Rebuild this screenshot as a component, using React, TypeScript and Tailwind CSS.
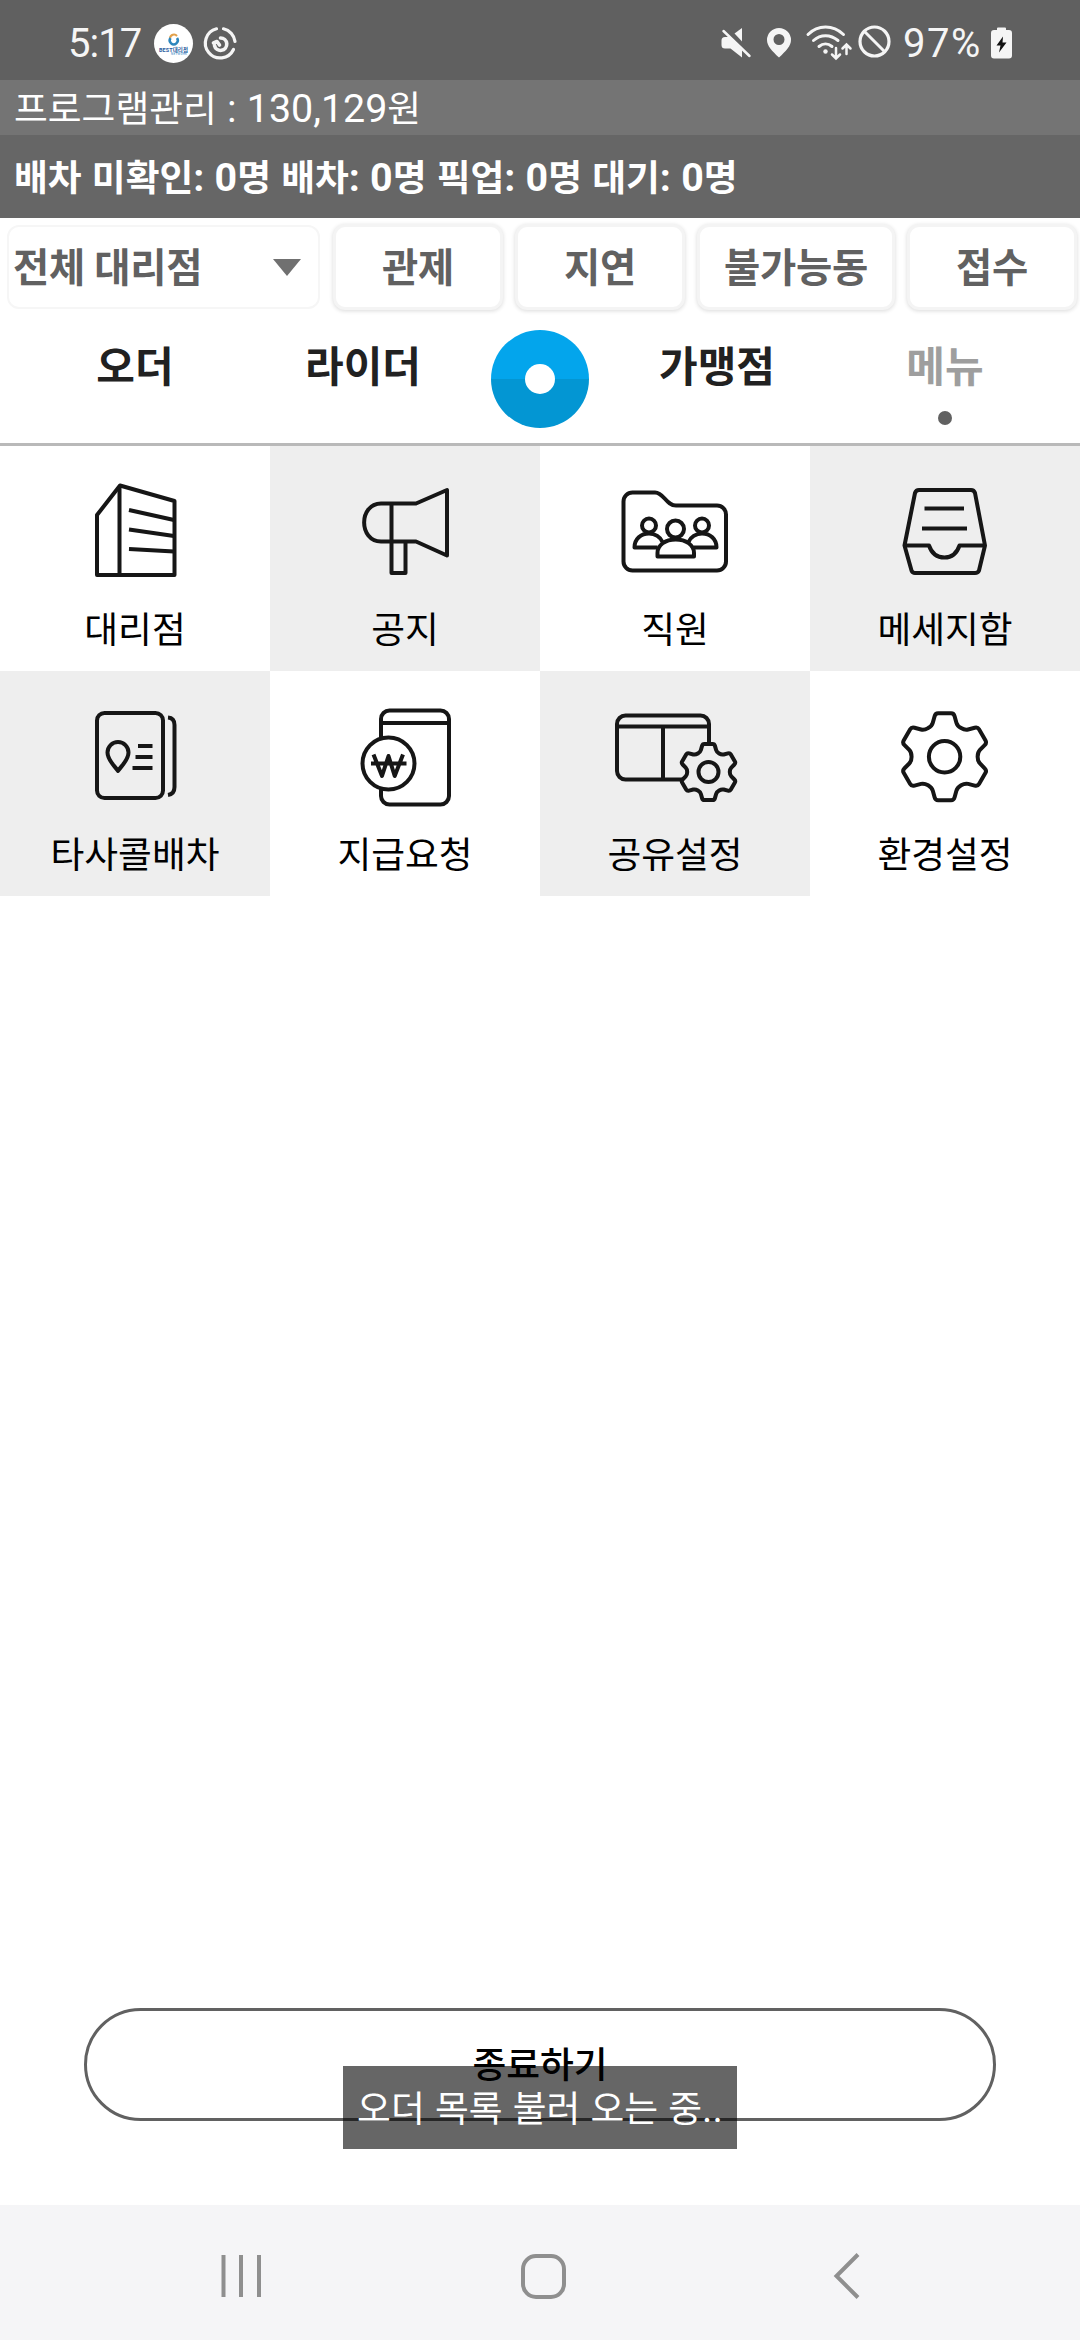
import type { ReactNode } from "react";

interface MenuItem {
  label: string;
  icon: ReactNode;
}

// Rotates one tooth outline six times to get the whole cog
const TOOTH: [string, number[][]][] = [
  ["C", [[-13.9, -30.1], [-12.5, -31.5], [-11.8, -34]]],
  ["L", [[-10, -40.5]]],
  ["Q", [[-9.2, -43.5], [-6.5, -43.5]]],
  ["L", [[6.5, -43.5]]],
  ["Q", [[9.2, -43.5], [10, -40.5]]],
  ["L", [[11.8, -34]]],
  ["C", [[12.5, -31.5], [13.9, -30.1], [16.5, -28.6]]],
];

const gearPath = (cx: number, cy: number, scale: number) => {
  const place = ([x, y]: number[], turn: number) => {
    const a = (turn * Math.PI) / 3;
    const px = cx + scale * (x * Math.cos(a) - y * Math.sin(a));
    const py = cy + scale * (x * Math.sin(a) + y * Math.cos(a));
    return `${px.toFixed(2)} ${py.toFixed(2)}`;
  };
  let d = `M${place([-16.5, -28.6], 0)}`;
  for (let turn = 0; turn < 6; turn++) {
    for (const [cmd, pts] of TOOTH) {
      d += cmd + pts.map((p) => place(p, turn)).join(" ");
    }
  }
  return d + "Z";
};

const MENU: MenuItem[] = [
  {
    label: "대리점",
    icon: (
      <>
        <path d="M97 69 120 39.5 174.5 55V129H97Z" />
        <path d="M119.5 40V129M129 64 174 74M129 83.5 174 90M129 103 174 105.5" />
      </>
    ),
  },
  {
    label: "공지",
    icon: (
      <>
        <path d="M111 57.5H146L177 44V109.5L146 95.5H111C88.5 95 88.5 58 111 57.5Z" />
        <path d="M121.5 57.5V127H135.5V95.5" />
      </>
    ),
  },
  {
    label: "직원",
    icon: (
      <>
        <path d="M92.5 46.5H115C124 46.5 126 59.5 136 59.5H177A9 9 0 0 1 186 68.5V115.5A9 9 0 0 1 177 124.5H92.5A9 9 0 0 1 83.5 115.5V55.5A9 9 0 0 1 92.5 46.5Z" />
        <circle cx="109" cy="79.5" r="7" />
        <circle cx="162" cy="79.5" r="7" />
        <circle cx="135.5" cy="83" r="8.5" />
        <path d="M117.5 101.5H94.5C94.5 93 101 87.5 109 87.5 115 87.5 120.5 91 122.5 96" />
        <path d="M153.5 101.5H176.5C176.5 93 170 87.5 162 87.5 156 87.5 150.5 91 148.5 96" />
        <path d="M117.5 110.5H154V107C154 99 146 93.5 135.7 93.5S117.5 99 117.5 107Z" />
      </>
    ),
  },
  {
    label: "메세지함",
    icon: (
      <>
        <path d="M94.5 99.5 105 47Q106 44 109 44H161Q164 44 165 47L175 99.5 169 124.5Q168 127 165 127H105Q102.5 127 101.5 124.5Z" />
        <path d="M94.5 99.5H119C121.5 107 127 111.5 134.5 111.5S147 107 149.5 99.5H175" />
        <path d="M114.5 62.5H154M112 82.5H157" />
      </>
    ),
  },
  {
    label: "타사콜배차",
    icon: (
      <>
        <rect x="97" y="42" width="66" height="85" rx="7.5" />
        <path d="M168 46.5Q174.5 47 174.5 54V116Q174.5 123 168 124" />
        <path d="M118 100C114 94 107.5 89 107.5 81.5A10.5 10.5 0 0 1 128.5 81.5C128.5 89 122 94 118 100Z" />
        <path d="M138 75H152.5M135.5 86H152.5M132.5 97H152.5" />
      </>
    ),
  },
  {
    label: "지급요청",
    icon: (
      <>
        <rect x="111" y="39.5" width="68" height="94" rx="8.5" />
        <path d="M111 52H179" />
        <circle cx="118.5" cy="92.5" r="26" fill="#fff" />
        <path d="M103.5 83.5 112 105 118.5 85 124.7 105 133 83.5M101 92.5H136.5" />
      </>
    ),
  },
  {
    label: "공유설정",
    icon: (
      <>
        <rect x="77" y="44.5" width="92" height="64" rx="8.5" />
        <path d="M77 55.5H169M123 55.5V108.5" />
        <path d={gearPath(168.5, 101, 0.645)} fill="#eee" />
        <circle cx="168.5" cy="101" r="10" />
      </>
    ),
  },
  {
    label: "환경설정",
    icon: (
      <>
        <path d={gearPath(134.6, 85.7, 1)} />
        <circle cx="134.6" cy="85.7" r="15.7" />
      </>
    ),
  },
];

// Hangul is set a little smaller than the digits and punctuation around it
const MixedText = ({ children }: { children: string }) => (
  <span className="text-[39.4px] whitespace-pre [word-spacing:0.4px]">
    {children.split(/([가-힣]+)/).map((part, i) =>
      i % 2 ? (
        <span key={i} className="text-[36.75px]">
          {part}
        </span>
      ) : (
        part
      ),
    )}
  </span>
);

const StatusBar = () => (
  <div className="flex h-20 items-center bg-[#606060] pt-[7px] text-[40px] text-[#f5f5f5]">
    <span className="ml-[68px] w-[86px] tracking-[-1px]">5:17</span>
    <svg width="90" height="40" viewBox="154 24 90 40" fill="none">
      <circle cx="173.5" cy="43.5" r="19.5" fill="#fff" />
      <path d="M170 38A4 4 0 0 1 177 36" stroke="#e2a04a" strokeWidth="2" />
      <path d="M170.5 38A4 4 0 1 0 177 38" stroke="#2d86bd" strokeWidth="2.5" />
      <text x="159" y="51.5" fontSize="5.5" fontWeight="700" fill="#2b5c9e" textLength="29">
        BEST대리점
      </text>
      <text x="171" y="55" fontSize="3" fill="#2b7fc0" textLength="16">
        NETWORK
      </text>
      <g stroke="#f5f5f5" strokeWidth="3.2" strokeLinecap="round">
        <path d="M216.5 28.8A14.8 14.8 0 1 0 233.5 49.5M223.5 28.8A14.8 14.8 0 0 1 235 41.5" />
        <path d="M220.5 38A6.2 6.2 0 1 1 214.5 45.5" strokeWidth="3.6" />
        <path d="M213.5 43 217 41.5 219.5 45" strokeWidth="3.6" strokeLinejoin="round" />
      </g>
    </svg>
    <svg className="ml-[477px]" width="173" height="40" viewBox="721 24 173 40" fill="none">
      <g fill="#f5f5f5">
        <path d="M742 28V41.5L734.5 33.5Z" />
        <path d="M725 37H729L742 50V57.5L730.5 48.5H725Q721.500 48.500 721.500 45V40.500Q721.500 37 725 37Z" />
        <path
          fillRule="evenodd"
          d="M779 28A12 12 0 0 0 767 40C767 46 772 51 779 57.5 786 51 791 46 791 40A12 12 0 0 0 779 28ZM779 34A5.5 5.5 0 1 1 779 45 5.5 5.5 0 0 1 779 34Z"
        />
        <circle cx="825.5" cy="51.5" r="2.2" />
      </g>
      <g stroke="#f5f5f5" strokeLinecap="round">
        <path d="M723.5 31 749.500 56" strokeWidth="2.5" />
        <path
          d="M808 34.500C818 24.500 833 24.500 843.500 34.500M813.500 40.500C820.500 34 830.500 34 838 40.500M819 46.500C823 43 828 43 832 46.500"
          strokeWidth="3"
        />
        <path
          d="M836 48V58M832 54.5 836 58.5 840 54.5M846.5 54V45M842.5 48.5 846.5 44.5 850.5 48.5"
          strokeWidth="2.5"
        />
        <circle cx="874.5" cy="41.5" r="14.5" strokeWidth="3.2" />
        <path d="M864.5 31.5 884.5 51.5" strokeWidth="3" />
      </g>
    </svg>
    <span className="ml-[9px] w-[88px] tracking-[1.5px]">97%</span>
    <svg width="22" height="40" viewBox="991 24 22 40">
      <path d="M997 30V28.5Q997 27.5 998 27.5H1005Q1006 27.5 1006 28.5V30H1009Q1012 30 1012 33V55.5Q1012 58.5 1009 58.5H994Q991 58.5 991 55.5V33Q991 30 994 30Z" fill="#f5f5f5" />
      <path d="M1003 36.5 996.5 45.5H1000.5L999 52.5 1006.5 42.5H1002.5Z" fill="#111" />
    </svg>
  </div>
);

const FILTERS = [
  { label: "관제", width: "w-[170px]" },
  { label: "지연", width: "w-[170px]" },
  { label: "불가능동", width: "w-[198px]" },
  { label: "접수", width: "w-[170px]" },
];

const Toolbar = () => (
  <div className="flex h-[98px] pt-[6px] pl-[7px] text-[39.4px] font-bold text-[#616161]">
    <div className="mt-px mr-[13px] flex h-[84px] w-[313px] items-center justify-between rounded-xl border-2 border-[#f6f6f6] pr-[17px] pl-[4px]">
      <span className="pt-[4px] tracking-[-0.3px]">전체 대리점</span>
      <svg width="28" height="17" viewBox="0 0 28 17" fill="#707070">
        <path d="M0 0H28L14 17Z" />
      </svg>
    </div>
    <div className="flex gap-3">
      {FILTERS.map((f) => (
        <button
          key={f.label}
          className={`${f.width} flex h-[86px] items-center justify-center rounded-xl border-[3px] border-[#f4f4f4] bg-white pt-[3px] tracking-[-0.3px] shadow-[0_1px_4px_rgba(0,0,0,0.15)]`}
        >
          {f.label}
        </button>
      ))}
    </div>
  </div>
);

const Tabs = () => (
  <div className="flex h-[130px] border-b-[3px] border-[#b9b9b9] text-[42px] leading-[60px] font-bold text-[#212121]">
    <div className="w-[270px] pt-[22px] text-center">오더</div>
    <div className="w-[186px] pt-[22px] text-center">라이더</div>
    <div className="flex w-[168px] justify-center pt-[14px]">
      <div className="flex size-[98px] items-center justify-center rounded-full bg-linear-to-b from-[#03a5ec] from-50% to-[#0396d3] to-50%">
        <div className="size-[30px] rounded-full bg-white" />
      </div>
    </div>
    <div className="w-[186px] pt-[22px] text-center">가맹점</div>
    <div className="flex w-[270px] flex-col items-center pt-[22px] text-[#9e9e9e]">
      메뉴
      <span className="mt-[13px] size-[14px] rounded-full bg-[#616161]" />
    </div>
  </div>
);

export default function App() {
  return (
    <div className="flex h-[2340px] w-[1080px] flex-col bg-white font-[Roboto,'Noto_Sans_CJK_KR',sans-serif]">
      <StatusBar />
      <div className="flex h-[55px] items-center bg-[#747474] pt-[3px] pl-[14px] text-white">
        <MixedText>프로그램관리 : 130,129원</MixedText>
      </div>
      <div className="flex h-[83px] items-center bg-[#666] pt-[3px] pl-[14px] font-bold text-white">
        <MixedText>배차 미확인: 0명 배차: 0명 픽업: 0명 대기: 0명</MixedText>
      </div>
      <Toolbar />
      <Tabs />

      <div className="grid grid-cols-4 text-[36.75px] text-black">
        {MENU.map((item, i) => (
          <div
            key={item.label}
            className={`flex h-[225px] flex-col items-center pt-[30px] ${(i + Math.floor(i / 4)) % 2 ? "bg-[#eee]" : "bg-white"}`}
          >
            <svg
              width="150"
              height="110"
              viewBox="60 30 150 110"
              fill="none"
              stroke="#161616"
              strokeWidth="4"
              strokeLinejoin="round"
            >
              {item.icon}
            </svg>
            <span className="mt-[18px] leading-[54px]">{item.label}</span>
          </div>
        ))}
      </div>

      {/* Exit button with the loading toast over it */}
      <div className="relative mt-auto mb-[84px] px-[84px]">
        <button className="flex h-[113px] w-full items-center justify-center rounded-full border-[3px] border-[#616161] pt-[3px] text-[36.75px] font-medium text-black">
          종료하기
        </button>
        <div className="absolute top-[58px] left-[343px] flex h-[83px] w-[394px] items-center justify-center bg-black/60 pt-[3px] text-white">
          <MixedText>오더 목록 불러 오는 중..</MixedText>
        </div>
      </div>

      <div className="flex h-[135px] bg-[#f5f5f7]">
        <svg width="1080" height="135" fill="none" stroke="#8f8f8f" strokeWidth="4">
          <path d="M223.5 50V92M241 50V92M259 50V92" />
          <rect x="523" y="51" width="41" height="41" rx="13" />
          <path d="M858 49.5 836.5 71 858 92.5" />
        </svg>
      </div>
    </div>
  );
}
